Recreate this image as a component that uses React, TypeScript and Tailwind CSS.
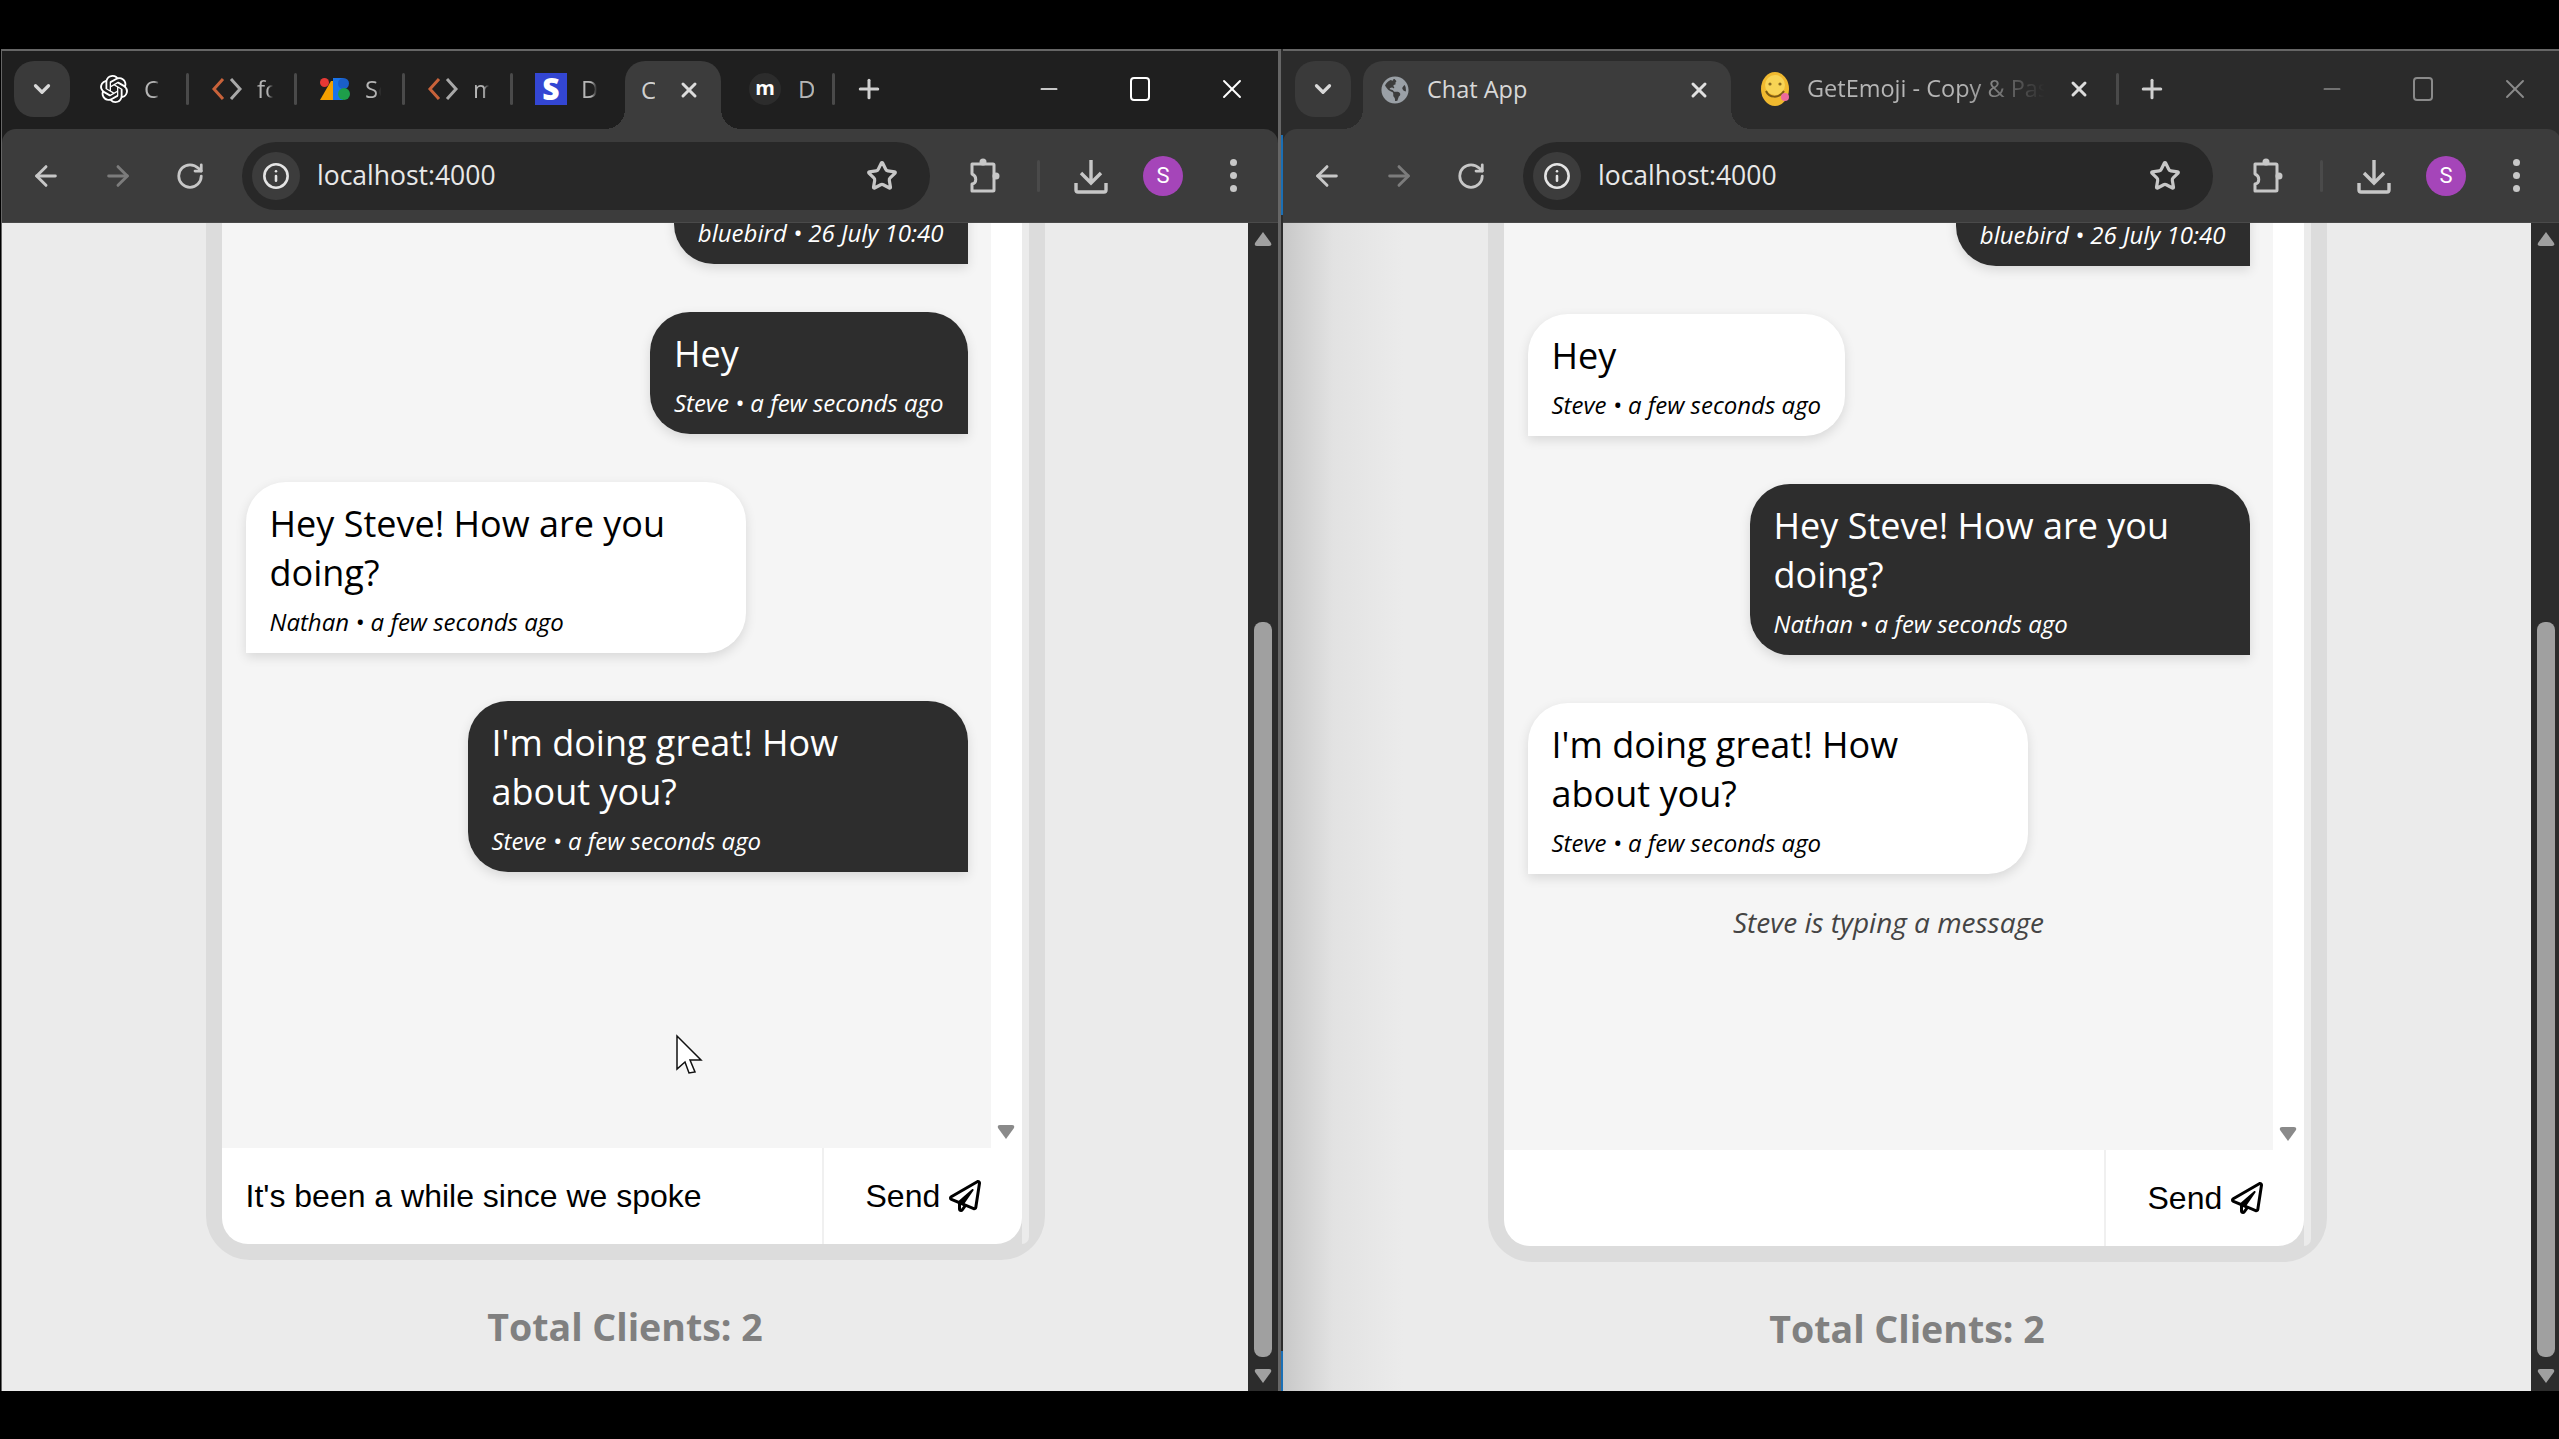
import React from "react";
import { ArrowLeft, ArrowRight, ChevronDown, Info, Minus, Plus, RotateCw, Star, X } from "lucide-react";
import { FaGlobeAmericas, FaRegPaperPlane } from "react-icons/fa";
import { SiOpenai } from "react-icons/si";

const sans = "font-['Open_Sans','Noto_Sans',sans-serif]";
const fade = "[mask-image:linear-gradient(to_right,black_65%,transparent)]";

const CodeIcon = () => (
  <svg width="32" height="24" viewBox="0 0 32 24" fill="none" strokeWidth="3">
    <path d="M12 2 3 12l9 10" stroke="#c8623a" />
    <path d="M20 2l9 10-9 10" stroke="#a8a8a8" />
  </svg>
);

const StudioLogo = () => (
  <svg width="30" height="22" viewBox="0 0 30 22">
    <path d="M0 22 11 3l2 0v19z" fill="#f4a000" />
    <circle cx="4.5" cy="4.5" r="4.5" fill="#e53935" />
    <path d="M13 0h10v22H13z" fill="#1a73e8" />
    <circle cx="23.5" cy="5.5" r="5.5" fill="#1a5fc8" />
    <circle cx="24" cy="16" r="6" fill="#1e9e4a" />
  </svg>
);

const Emoji = () => (
  <svg width="30" height="36" viewBox="0 0 30 36">
    <ellipse cx="15" cy="18" rx="14" ry="17" fill="#f0b92f" />
    <ellipse cx="15" cy="14" rx="10" ry="10" fill="#f8d455" />
    <circle cx="10" cy="13" r="1.6" fill="#8a6a20" />
    <circle cx="20" cy="13" r="1.6" fill="#8a6a20" />
    <path d="M6 20c3 7 13 8 18 0" stroke="#7a5a14" strokeWidth="2" fill="none" />
    <circle cx="25" cy="26" r="4" fill="#ec6a9c" />
  </svg>
);

const PuzzleIcon = () => (
  <svg width="32" height="36" viewBox="0 0 32 36" fill="none" stroke="#c7c7c7" strokeWidth="3">
    <circle cx="14" cy="4" r="3.5" fill="#c7c7c7" stroke="none" />
    <circle cx="27" cy="18" r="3.5" fill="#c7c7c7" stroke="none" />
    <path d="M3 6h21a1 1 0 0 1 1 1v25a1 1 0 0 1-1 1H3v-7c5-1 5-8 0-10V6z" strokeLinejoin="round" />
  </svg>
);

const DownloadIcon = () => (
  <svg width="34" height="36" viewBox="0 0 34 36" fill="none" stroke="#c7c7c7" strokeWidth="3.4">
    <path d="M17 2v22M7 15l10 10 10-10" />
    <path d="M2 25v7a2 2 0 0 0 2 2h26a2 2 0 0 0 2-2v-7" />
  </svg>
);

const Sep = ({ className = "" }: { className?: string }) => (
  <div className={`w-[3px] rounded bg-[#4a4a4a] shrink-0 ${className}`} />
);

const ActiveTab = ({ className, children }: { className: string; children: React.ReactNode }) => (
  <div className={`relative h-[68px] mt-[10px] self-start bg-[#3c3c3c] rounded-t-[20px] flex items-center pb-[11px] shrink-0 ${className}`}>
    <div className="absolute bottom-0 -left-[20px] w-[20px] h-[20px] bg-[radial-gradient(circle_at_0_0,transparent_20px,#3c3c3c_20px)]" />
    <div className="absolute bottom-0 -right-[20px] w-[20px] h-[20px] bg-[radial-gradient(circle_at_100%_0,transparent_20px,#3c3c3c_20px)]" />
    {children}
  </div>
);

const MiniTab = ({ icon, label, width }: { icon: React.ReactNode; label: string; width: string }) => (
  <div className={`flex items-center h-full shrink-0 pl-[18px] ${width}`}>
    <div className="w-[40px] flex justify-center shrink-0">{icon}</div>
    <span className={`ml-[10px] w-[16px] overflow-hidden whitespace-nowrap text-[24px] text-[#b5b5b5] ${sans} ${fade}`}>{label}</span>
  </div>
);

const LeftTabs = () => (
  <div className="flex items-center h-full">
    <div className="w-[6px]" />
    <MiniTab width="w-[110px]" icon={<SiOpenai size={28} color="#fff" />} label="Ch" />
    <Sep className="h-[32px]" />
    <MiniTab width="w-[105px]" icon={<CodeIcon />} label="fc" />
    <Sep className="h-[32px]" />
    <MiniTab width="w-[105px]" icon={<StudioLogo />} label="Sc" />
    <Sep className="h-[32px]" />
    <MiniTab width="w-[105px]" icon={<CodeIcon />} label="m" />
    <Sep className="h-[32px]" />
    <MiniTab
      width="w-[105px]"
      icon={<div className={`w-[32px] h-[32px] bg-[#3346d3] text-white text-[30px] leading-[32px] font-extrabold text-center ${sans}`}>S</div>}
      label="D"
    />
    <div className="w-[7px]" />
    <ActiveTab className="w-[96px] pl-[16px]">
      <span className={`text-[24px] w-[14px] overflow-hidden text-[#d0d0d0] ${sans}`}>C</span>
      <X size={24} strokeWidth={3} className="ml-[22px] text-[#dcdcdc]" />
    </ActiveTab>
    <div className="w-[28px]" />
    <div className={`w-[32px] h-[32px] rounded-full bg-[#2c2c2c] text-white font-bold text-[20px] leading-[30px] text-center ${sans}`}>m</div>
    <span className={`ml-[17px] w-[16px] overflow-hidden text-[24px] text-[#b5b5b5] ${sans}`}>D</span>
    <Sep className="ml-[18px] h-[32px]" />
    <Plus size={30} strokeWidth={2.4} className="ml-[19px] text-[#d0d0d0]" />
  </div>
);

const RightTabs = () => (
  <div className="flex items-center h-full">
    <div className="w-[12px]" />
    <TabButton bg="bg-[#3a3a3a]" />
    <ActiveTab className="w-[368px] ml-[12px] pl-[18px]">
      <FaGlobeAmericas size={28} color="#9aa0a6" />
      <span className={`ml-[18px] text-[23.5px] text-[#d8d8d8] ${sans}`}>Chat App</span>
      <X size={24} strokeWidth={3} className="ml-auto mr-[20px] text-[#e0e0e0]" />
    </ActiveTab>
    <div className="w-[29px]" />
    <Emoji />
    <span className={`ml-[17px] w-[238px] whitespace-nowrap overflow-hidden text-[23.5px] text-[#b5b5b5] ${sans} ${fade}`}>GetEmoji - Copy &amp; Paste</span>
    <X size={24} strokeWidth={3} className="ml-[22px] text-[#dcdcdc]" />
    <Sep className="ml-[25px] h-[32px]" />
    <Plus size={30} strokeWidth={2.4} className="ml-[18px] text-[#d0d0d0]" />
  </div>
);

const TabButton = ({ bg }: { bg: string }) => (
  <div className={`w-[56px] h-[56px] rounded-[20px] flex items-center justify-center shrink-0 ${bg}`}>
    <ChevronDown size={26} strokeWidth={3} className="text-[#d8d8d8]" />
  </div>
);

const Bubble = ({ mine, wide, text, meta, className = "" }: { mine: boolean; wide?: boolean; text: string; meta: string; className?: string }) => (
  <div
    className={`shrink-0 pt-[17px] pb-[15px] pl-[24px] shadow-[0_4px_12px_rgba(0,0,0,0.12)] ${wide ? "w-[500px] pr-[32px]" : "w-fit pr-[24px]"} ${
      mine ? "self-end bg-[#2d2d2d] text-white rounded-[40px] rounded-br-none" : "self-start bg-white text-black rounded-[40px] rounded-bl-none"
    } ${className}`}
  >
    <p className={`text-[36px] leading-[49px] ${sans}`}>{text}</p>
    <p className={`mt-[8px] text-[24px] leading-[33px] italic whitespace-nowrap ${sans}`}>{meta}</p>
  </div>
);

const ScrollTriangle = ({ up, className }: { up?: boolean; className: string }) => (
  <svg width="18" height="14" viewBox="0 0 18 14" className={className}>
    <path d={up ? "M9 0 17 11q1 3-2 3H3q-3 0-2-3z" : "M9 14 17 3q1-3-2-3H3q-3 0-2 3z"} fill="currentColor" />
  </svg>
);

const ChatCard = ({ peer }: { peer?: boolean }) => (
  <div className={`w-[839px] shrink-0 flex border-x-[16px] border-b-[16px] border-[#dcdcdc] bg-[#dcdcdc] rounded-b-[44px] ${peer ? "h-[1039px]" : "h-[1037px]"}`}>
    <div className="w-[800px] shrink-0 flex flex-col">
      <div className="flex-1 min-h-0 flex bg-white">
        <div className="flex-1 min-w-0 flex flex-col gap-[48px] bg-[#f5f5f5] pl-[24px] pr-[23px] overflow-hidden">
          <Bubble mine text="Hey" meta="bluebird • 26 July 10:40" className={peer ? "-mt-[79px]" : "-mt-[81px]"} />
          <Bubble mine={!peer} text="Hey" meta="Steve • a few seconds ago" />
          <Bubble mine={!!peer} wide text="Hey Steve! How are you doing?" meta="Nathan • a few seconds ago" />
          <Bubble mine={!peer} wide text="I'm doing great! How about you?" meta="Steve • a few seconds ago" />
          {peer && (
            <p className={`-mt-[14px] text-center text-[28px] leading-[28px] italic text-[#444] ${sans}`}>Steve is typing a message</p>
          )}
        </div>
        <div className="w-[31px] flex flex-col justify-end items-center pb-[9px] bg-white">
          <ScrollTriangle className="text-[#8a8a8a]" />
        </div>
      </div>
      <div className="h-[96px] flex bg-white rounded-b-[26px] font-['Liberation_Sans',sans-serif] text-[32px] text-black">
        <div className="w-[602px] flex items-center pl-[24px] border-r-2 border-[#f0f0f0]">{peer ? "" : "It's been a while since we spoke"}</div>
        <div className="flex-1 flex items-center pl-[42px] gap-[9px]">
          Send <FaRegPaperPlane size={32} />
        </div>
      </div>
    </div>
    <div className="flex-1 bg-[#ebebeb] rounded-br-[26px]" />
  </div>
);

const Browser = ({ peer }: { peer?: boolean }) => {
  const capIcon = peer ? "text-[#8a8a8a]" : "text-white";
  return (
    <div
      className={`flex flex-col shrink-0 h-full border-t-2 border-[#666] ${
        peer ? "w-[1278px] bg-[#2b2b2b]" : "w-[1277px] border-l bg-[#1f1f1f]"
      }`}
    >
      <div className="h-[78px] pb-[2px] flex items-center shrink-0">
        {peer ? (
          <RightTabs />
        ) : (
          <>
            <div className="w-[12px]" />
            <TabButton bg="bg-[#3a3a3a]" />
            <LeftTabs />
          </>
        )}
        <div className={`ml-auto flex items-center ${capIcon}`}>
          <Minus size={26} strokeWidth={1.6} className="mr-[68px]" />
          <div className="w-[20px] h-[24px] rounded-[4px] border-2 border-current mr-[66px]" />
          <X size={32} strokeWidth={1.4} className="mr-[30px]" />
        </div>
      </div>
      <div className="h-[94px] shrink-0 flex items-center bg-[#3c3c3c] border-b border-[#4a4a4a] rounded-t-[14px]">
        <ArrowLeft size={32} strokeWidth={2.2} className="ml-[28px] text-[#c7c7c7]" />
        <ArrowRight size={32} strokeWidth={2.2} className="ml-[40px] text-[#7c7c7c]" />
        <RotateCw size={30} strokeWidth={2.2} className="ml-[41px] text-[#c7c7c7]" />
        <div className={`ml-[37px] h-[68px] flex items-center rounded-full bg-[#282828] ${peer ? "w-[690px]" : "w-[688px]"}`}>
          <div className="ml-[10px] w-[48px] h-[48px] rounded-full bg-[#3c3c3c] flex items-center justify-center">
            <Info size={28} strokeWidth={2.2} className="text-[#e4e4e4]" />
          </div>
          <span className={`ml-[17px] text-[26.5px] text-[#e8e8e8] ${sans}`}>localhost:4000</span>
          <Star size={32} strokeWidth={2.4} className="ml-auto mr-[32px] text-[#c7c7c7]" />
        </div>
        <div className="ml-[39px]">
          <PuzzleIcon />
        </div>
        <Sep className="ml-[36px] h-[32px]" />
        <div className="ml-[34px]">
          <DownloadIcon />
        </div>
        <div className="ml-[35px] w-[40px] h-[40px] rounded-full bg-[#a545b9] text-white text-[22px] leading-[40px] text-center font-['Roboto',sans-serif]">S</div>
        <div className="ml-[47px] flex flex-col gap-[6px]">
          <span className="w-[7px] h-[7px] rounded-full bg-[#c7c7c7]" />
          <span className="w-[7px] h-[7px] rounded-full bg-[#c7c7c7]" />
          <span className="w-[7px] h-[7px] rounded-full bg-[#c7c7c7]" />
        </div>
      </div>
      <div className="flex-1 min-h-0 flex">
        <div
          className={`relative flex-1 min-w-0 flex flex-col items-center overflow-hidden ${
            peer ? "bg-[linear-gradient(to_right,#c8c8c8,#e2e2e2_50px,#ebebeb_120px)]" : "bg-[#ebebeb]"
          }`}
        >
          <ChatCard peer={peer} />
          <p className={`mt-[39px] text-[37.5px] font-bold text-[#808080] ${sans}`}>Total Clients: 2</p>
          {!peer && (
            <svg width="28" height="42" viewBox="0 0 28 42" className="absolute left-[673px] top-[811px]">
              <path d="M2 2v33l8-7 4 11 6-1-5-12h11z" fill="#fff" stroke="#111" strokeWidth="1.5" strokeLinejoin="miter" />
            </svg>
          )}
        </div>
        <div className="w-[30px] shrink-0 flex flex-col items-center bg-[#2c2c2c] pt-[9px] pb-[8px]">
          <ScrollTriangle up className="text-[#a0a0a0]" />
          <div className="mt-[376px] w-[18px] flex-1 rounded-[8px] bg-[#a0a0a0]" />
          <ScrollTriangle className="mt-[12px] text-[#a0a0a0]" />
        </div>
      </div>
    </div>
  );
};

export default function App() {
  return (
    <div className="w-[2559px] h-[1439px] overflow-hidden bg-black flex flex-col">
      <div className="mt-[49px] h-[1342px] flex pl-[1px]">
        <Browser />
        <div className="relative w-[5px] shrink-0 bg-[#2c2c2c] border-l-3 border-[#666]">
          <div className="absolute right-0 top-[86px] w-[2px] h-[80px] bg-[#1a6fb5]" />
          <div className="absolute right-0 bottom-0 w-[2px] h-[40px] bg-[#1a6fb5]" />
        </div>
        <Browser peer />
      </div>
    </div>
  );
}
